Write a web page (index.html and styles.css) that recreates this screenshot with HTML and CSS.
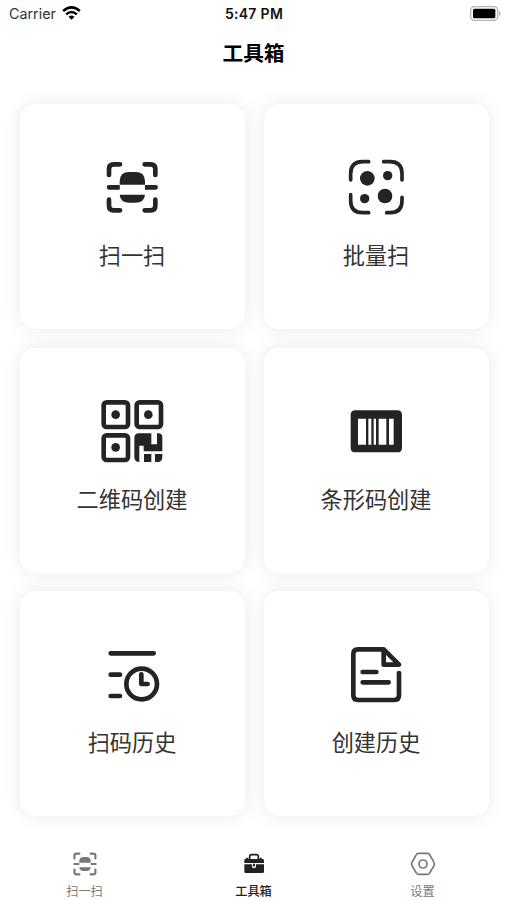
FILE: index.html
```html
<!DOCTYPE html>
<html lang="zh-CN">
<head>
<meta charset="utf-8">
<title>工具箱</title>
<link rel="stylesheet" href="styles.css">
</head>
<body>
<svg class="defs" width="0" height="0" aria-hidden="true">
  <symbol id="scan" viewBox="43 28 168 168">
    <g fill="none" stroke="currentColor" stroke-width="14" stroke-linecap="round" stroke-linejoin="round">
      <path d="M57 75V57q0-14 14-14h19M164 43h18q14 0 14 14v18M57 149v18q0 14 14 14h19M164 181h18q14 0 14-14v-18"/>
      <path d="M57 112h25M172 112h25"/>
    </g>
    <path fill="currentColor" d="M82 105h7v14h-7zM165 105h7v14h-7zM89 104V94q0-28 29-28h18q29 0 29 28v10zM89 134h76q-2 24-29 24h-18q-27 0-29-24z"/>
  </symbol>
</svg>
<div class="app">
  <header class="status">
    <div class="carrier"><span>Carrier</span>
      <svg class="wifi" viewBox="0 0 56 42"><g fill="none" stroke="#000" stroke-width="7.5"><path d="M3 15q25-22 50 0M12 25q16-14 32 0"/></g><path d="M19 32q9-7 18 0l-9 9z"/></svg>
    </div>
    <div class="time">5:47 PM</div>
    <svg class="battery" viewBox="0 0 93 45"><rect x="2" y="2" width="81" height="41" rx="11" fill="#fff" stroke="#b4b4b4" stroke-width="4"/><rect x="9" y="8" width="67" height="29" rx="5"/><path fill="#b4b4b4" d="M87 16q5 2 5 7t-5 7z"/></svg>
  </header>
  <h1 class="title">工具箱</h1>
  <main class="grid">
    <section class="card">
      <svg class="icon" viewBox="0 -12 252 252"><use href="#scan" x="43" y="28" width="168" height="168"/></svg>
      <p>扫一扫</p>
    </section>
    <section class="card">
      <svg class="icon" viewBox="-3 -12 252 252">
        <path fill="none" stroke="currentColor" stroke-width="11" stroke-linecap="round" d="M47 90V71q0-36 36-36h18M146 35h19q36 0 36 36v19M47 134v18q0 36 36 36h18M155 188h10q36 0 36-36v-10"/>
        <g fill="currentColor"><circle cx="97" cy="85" r="22"/><circle cx="158" cy="77" r="14"/><circle cx="89" cy="146" r="14"/><circle cx="150" cy="138" r="22"/></g>
      </svg>
      <p>批量扫</p>
    </section>
    <section class="card">
      <svg class="icon" viewBox="0 0 252 252">
        <g fill="none" stroke="currentColor" stroke-width="14"><rect x="41" y="37" width="73" height="74" rx="9"/><rect x="140" y="37" width="73" height="74" rx="9"/><rect x="41" y="136" width="73" height="74" rx="9"/></g>
        <g fill="currentColor"><circle cx="77" cy="74" r="13"/><circle cx="175" cy="74" r="13"/><circle cx="77" cy="172" r="13"/>
        <path d="M147 130h37v33h17v-33h4q12 0 12 12v42h-56v-17h-13v49q-15 0-15-15v-56q0-15 14-15zM162 192h22v24h-22zM195 192h22v9q0 15-15 15h-7z"/></g>
      </svg>
      <p>二维码创建</p>
    </section>
    <section class="card">
      <svg class="icon" viewBox="-2 -1 252 252">
        <path fill="currentColor" fill-rule="evenodd" d="M62 60h126q14 0 14 14v98q0 14-14 14H62q-14 0-14-14V74q0-14 14-14zM70 85v78h24V85zM101 85v78h9V85zM117 85v78h7V85zM132 85v78h23V85zM163 85v78h14V85z"/>
      </svg>
      <p>条形码创建</p>
    </section>
    <section class="card">
      <svg class="icon" viewBox="0 -6 252 252">
        <g fill="none" stroke="currentColor" stroke-width="14" stroke-linecap="round" stroke-linejoin="round"><path d="M62 55h129M62 119h28M62 183h28"/><circle cx="155" cy="147" r="46"/><path d="M154 118v29h19"/></g>
      </svg>
      <p>扫码历史</p>
    </section>
    <section class="card">
      <svg class="icon" viewBox="-2 -6 252 252">
        <g fill="none" stroke="currentColor" stroke-width="14" stroke-linecap="round" stroke-linejoin="round"><path d="M193 114v67q0 14-14 14H70q-14 0-14-14V57q0-14 14-14h77l46 46h-46V43"/><path d="M84 111h41M84 142h78"/></g>
      </svg>
      <p>创建历史</p>
    </section>
  </main>
  <nav class="tabs">
    <a class="tab"><svg viewBox="0 0 78 78"><use href="#scan" x="1" y="1" width="76" height="76"/></svg><span>扫一扫</span></a>
    <a class="tab active"><svg viewBox="0 0 78 78">
      <path fill="none" stroke="currentColor" stroke-width="5" d="M26 26v-9q0-6 6-6h14q6 0 6 6v9"/>
      <path fill="currentColor" d="M10 36v-9q0-3 3-3t3-4h6v4h34v-4h5q1 4 4 4t4 3v9zM10 40h23v6q0 6 6 6t6-6v-6h24v22q0 4-4 4H14q-4 0-4-4zM36 38h6v7q-3 4-6 0z"/></svg><span>工具箱</span></a>
    <a class="tab"><svg viewBox="0 0 78 78"><g fill="none" stroke="currentColor" stroke-width="5" stroke-linejoin="round"><path d="M25 7h28q4 0 6 4l13 23q3 5 0 10L59 66q-2 4-6 4H25q-4 0-6-4L6 44q-3-5 0-10l13-23q2-4 6-4z"/><circle cx="39" cy="39" r="12"/></g></svg><span>设置</span></a>
  </nav>
</div>
</body>
</html>
```
FILE: styles.css
```css
* { box-sizing: border-box; }
body {
  margin: 0;
  background: #fff;
  color: #222426;
  font-family: Inter, "Noto Sans CJK SC", sans-serif;
}
.defs { display: block; }
.app {
  display: flex;
  flex-direction: column;
  width: 507px;
  height: 900px;
  overflow: hidden;
}
.status {
  display: grid;
  grid-template-columns: 1fr auto 1fr;
  align-items: center;
  height: 28px;
  padding: 0 6px 0 9px;
  color: #111;
}
.carrier {
  display: flex;
  align-items: center;
  gap: 6px;
  font-size: 14.3px;
  color: #333;
}
.carrier span,
.time { margin-top: -1px; }
.wifi { width: 19px; height: 14px; margin-top: -2px; }
.time { padding-right: 2px; font-size: 14px; font-weight: 600; letter-spacing: 0.3px; }
.battery { width: 31px; height: 15px; justify-self: end; margin-top: -2px; }
.title {
  margin: 0;
  height: 76px;
  line-height: 48px;
  text-align: center;
  font-family: "Noto Sans CJK SC", sans-serif;
  font-size: 20.7px;
  font-weight: 700;
  color: #000;
}
.grid {
  display: grid;
  grid-template-columns: 225px 225px;
  grid-auto-rows: 225px;
  gap: 18.5px 19px;
  justify-content: center;
  padding-left: 1px;
}
.card {
  display: flex;
  flex-direction: column;
  align-items: center;
  padding-top: 42px;
  border-radius: 15px;
  background: #fff;
  box-shadow: 0 0 19px rgba(0, 0, 0, 0.085);
}
.icon { display: block; width: 84px; height: 84px; }
.card p {
  margin: 7px 0 0;
  line-height: 35px;
  font-family: "Noto Sans CJK SC", sans-serif;
  font-size: 22.2px;
  color: #333;
}
.tabs {
  display: grid;
  grid-template-columns: repeat(3, 1fr);
  margin-top: 35px;
}
.tab {
  display: flex;
  flex-direction: column;
  align-items: center;
  font-family: "Noto Sans CJK SC", sans-serif;
  font-size: 12.2px;
  line-height: 18px;
  color: #777;
}
.tab svg { width: 26px; height: 26px; margin-bottom: 5px; }
.tab.active { color: #222; font-weight: 500; }
```
